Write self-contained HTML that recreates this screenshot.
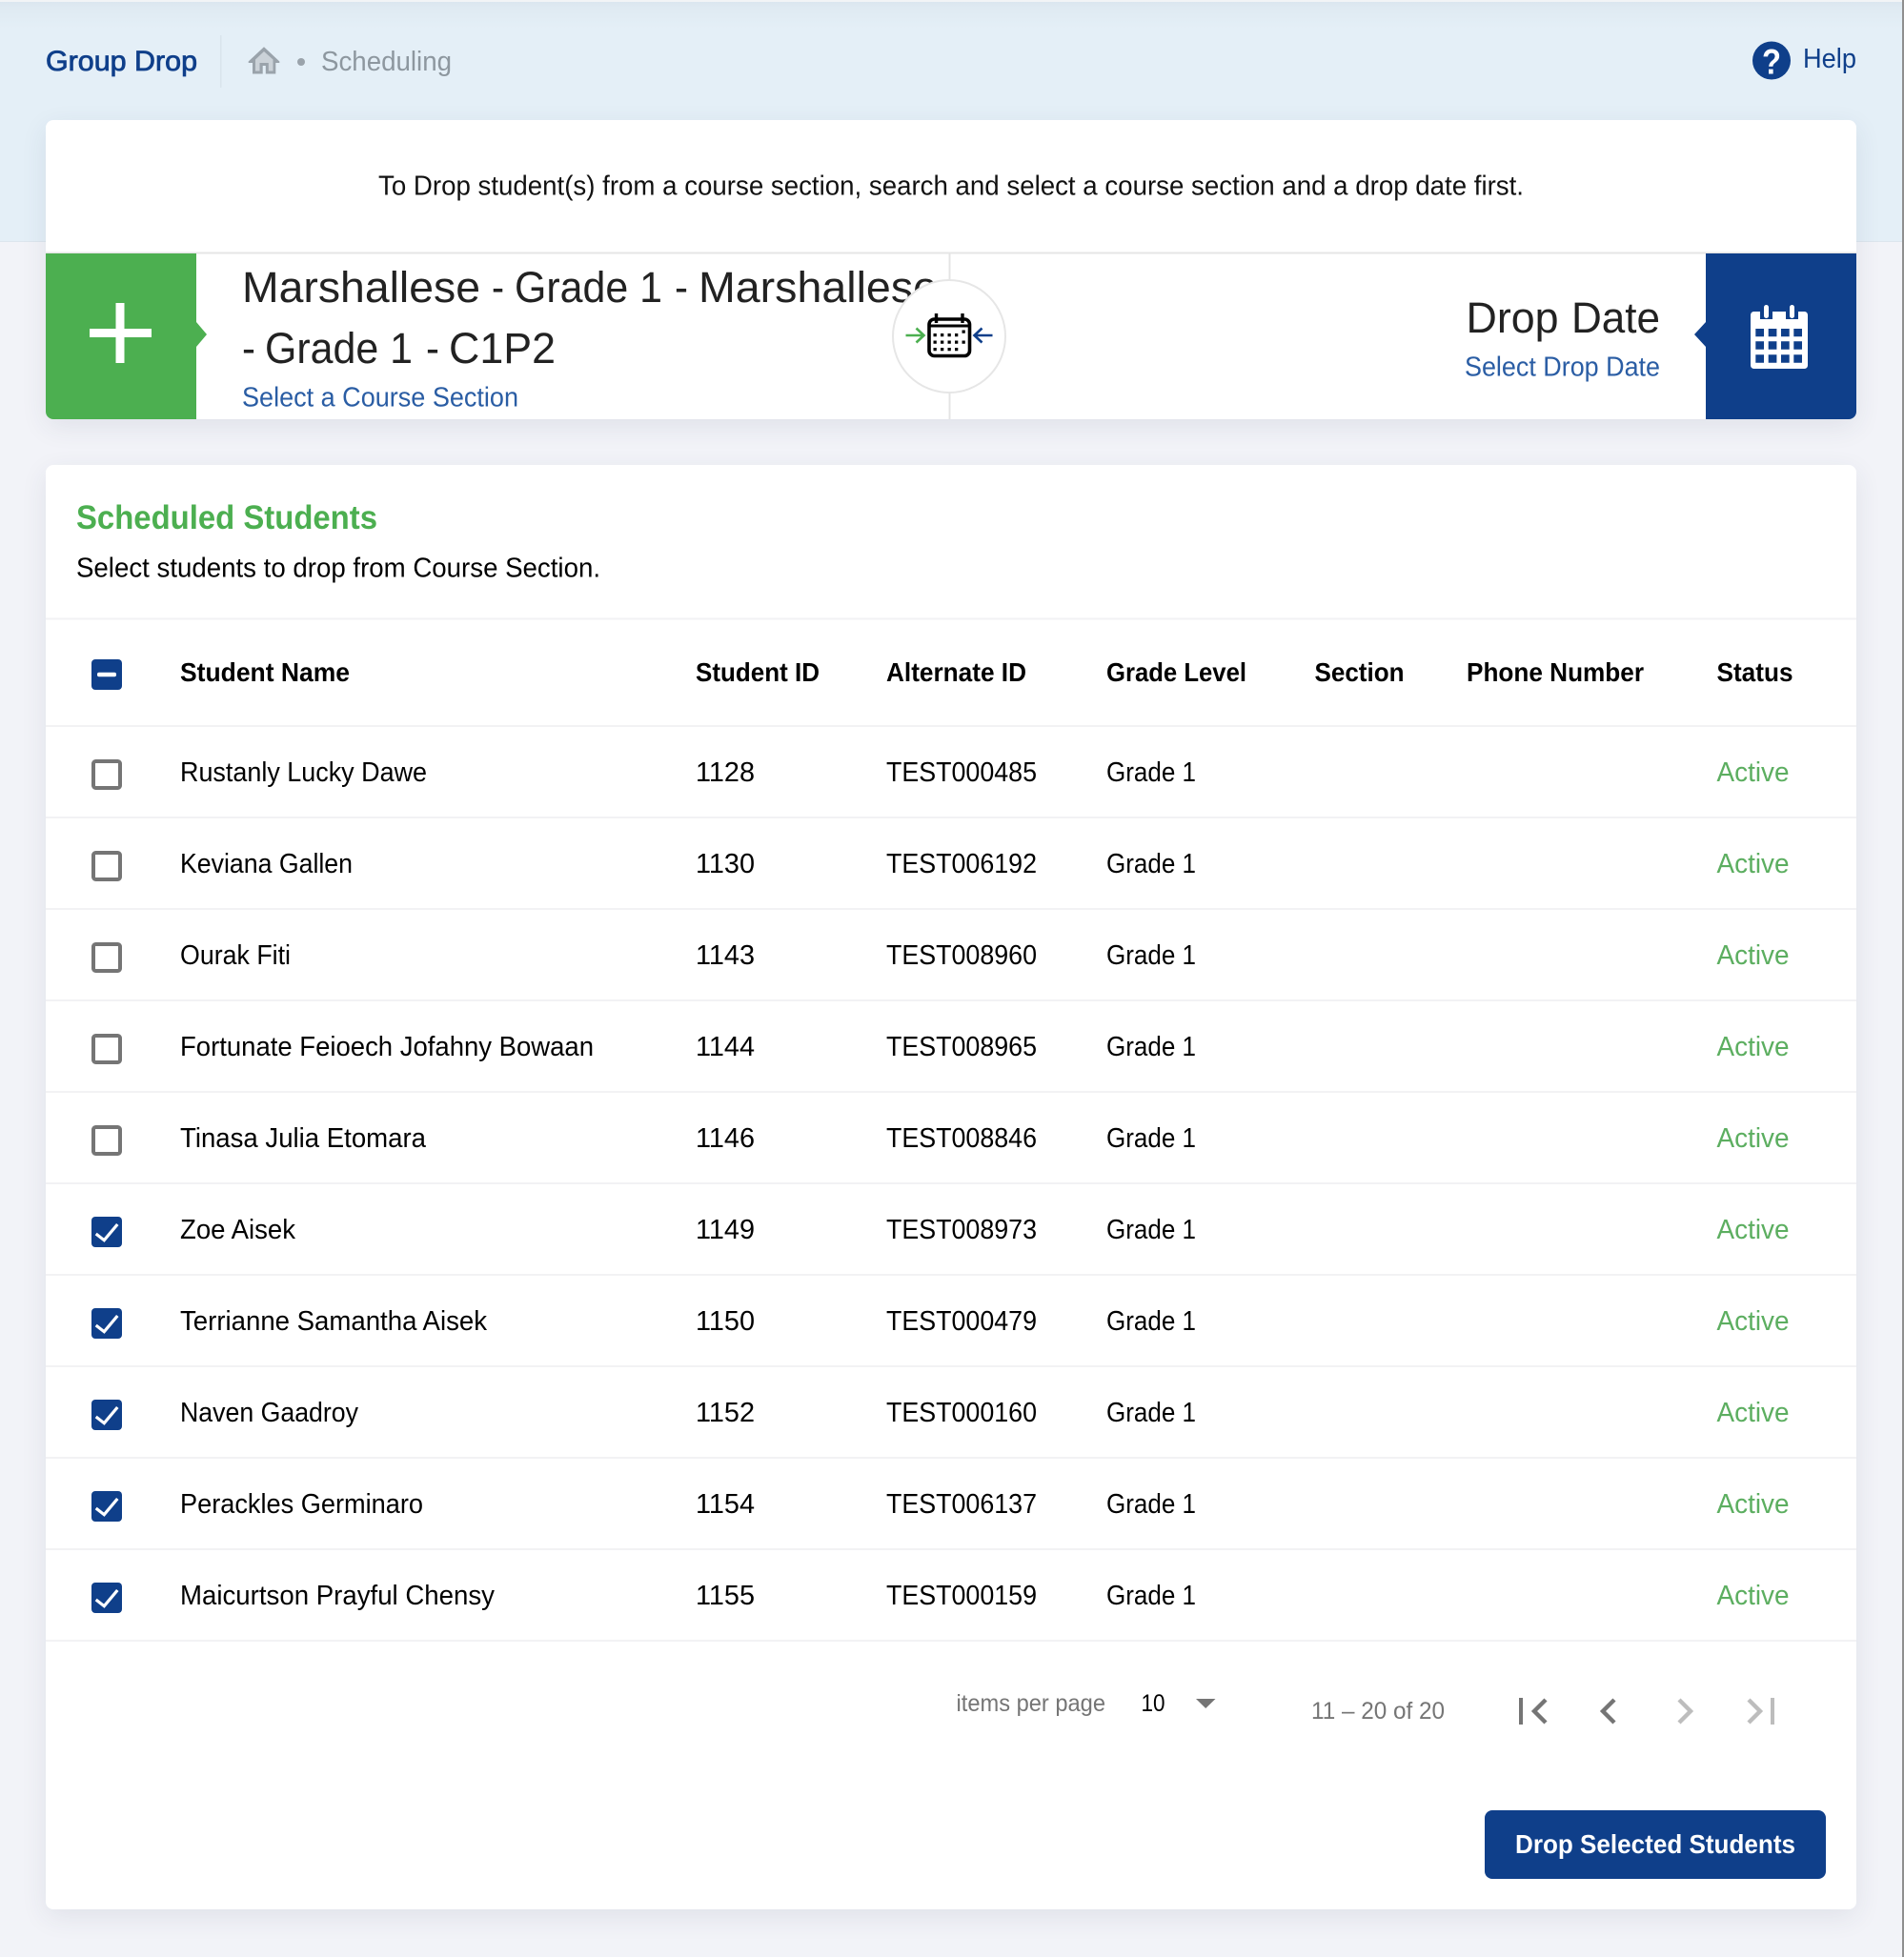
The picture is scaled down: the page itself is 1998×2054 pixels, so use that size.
<!DOCTYPE html>
<html lang="en"><head><meta charset="utf-8"><title>Group Drop</title>
<style>
html,body{margin:0;padding:0;width:1998px;height:2054px;overflow:hidden;background:#f2f3f8}
#band{position:absolute;left:0;top:0;width:1998px;height:253px;background:linear-gradient(#dbe6ef 2px,#dfeaf2 8px,#e4eff7 30px,#e4eff7);border-bottom:1px solid #dde6ee}
#top{position:absolute;left:0;top:0;width:1998px;height:2px;background:#f2f4f6}
.card{position:absolute;left:48px;width:1900px;background:#fff;border-radius:8px;box-shadow:0 8px 28px rgba(40,50,90,.09)}
#c1{top:126px;height:314px}
#c2{top:488px;height:1516px}
#sb{position:absolute;left:1996px;top:0;width:2px;height:2054px;background:#8f8f8f}
svg{position:absolute;left:0;top:0}
text{font-family:"Liberation Sans",sans-serif;font-size:28.8px;fill:#000;white-space:pre}
.b{font-weight:700;font-size:27.5px}
.a{fill:#5cae60}
.t{font-size:45px;fill:#222}
.l{fill:#2a5da4}
.g{fill:#757575;font-size:25px}
</style></head><body>
<div id="band"></div><div id="top"></div>
<div class="card" id="c1"></div><div class="card" id="c2"></div>
<svg width="1998" height="2054" viewBox="0 0 1998 2054">
<!-- header -->
<text x="48" y="74" style="font-size:30px;fill:#0f3f8a;stroke:#0f3f8a;stroke-width:.8px" textLength="159" lengthAdjust="spacingAndGlyphs">Group Drop</text>
<rect x="231" y="37" width="1.5" height="55" fill="#d9e4ec"/>
<path fill="#9aa3ab" d="M277 49.300L260.700 64.500V66H265V77.500H289.300V66H293.300V64.500Z"/>
<path fill="#cbd2d8" d="M277 54L268 62.500V74.500H286.500V62.500Z"/>
<path fill="#9aa3ab" d="M272.500 77.500V66H281.800V77.500Z"/>
<path fill="#e4eff7" d="M275.700 77.500V69H278.800V77.500Z"/>
<circle cx="316" cy="65" r="4" fill="#9aa3ab"/>
<text x="337" y="74" style="fill:#8d979f" textLength="137" lengthAdjust="spacingAndGlyphs">Scheduling</text>
<circle cx="1859" cy="63.500" r="20" fill="#0f3f8a"/>
<text x="1849" y="77.500" style="fill:#fff;font-size:37px;font-weight:700" textLength="20" lengthAdjust="spacingAndGlyphs">?</text>
<text x="1892" y="71" style="fill:#0f3f8a" textLength="56" lengthAdjust="spacingAndGlyphs">Help</text>

<!-- intro -->
<text x="397" y="204.500" style="fill:#111" textLength="1202" lengthAdjust="spacingAndGlyphs">To Drop student(s) from a course section, search and select a course section and a drop date first.</text>
<rect x="48" y="264.500" width="1900" height="2" fill="#e6e6e6"/>

<!-- green panel -->
<path fill="#4caf50" d="M48 266H206V338L217 351L206 364V440H56A8 8 0 0 1 48 432Z"/>
<rect x="94" y="345" width="65" height="9" fill="#fff"/>
<rect x="121.500" y="318" width="9" height="63" fill="#fff"/>
<text x="254" y="317" class="t" textLength="250" lengthAdjust="spacingAndGlyphs">Marshallese</text>
<text x="516" y="317" class="t" textLength="13" lengthAdjust="spacingAndGlyphs">-</text>
<text x="540" y="317" class="t" textLength="155" lengthAdjust="spacingAndGlyphs">Grade 1</text>
<text x="708" y="317" class="t" textLength="14" lengthAdjust="spacingAndGlyphs">-</text>
<text x="733" y="317" class="t" textLength="251" lengthAdjust="spacingAndGlyphs">Marshallese</text>
<text x="254" y="381" class="t" textLength="14" lengthAdjust="spacingAndGlyphs">-</text>
<text x="278" y="381" class="t" textLength="155" lengthAdjust="spacingAndGlyphs">Grade 1</text>
<text x="447" y="381" class="t" textLength="14" lengthAdjust="spacingAndGlyphs">-</text>
<text x="471" y="381" class="t" textLength="112" lengthAdjust="spacingAndGlyphs">C1P2</text>
<text x="254" y="426.500" class="l" textLength="290" lengthAdjust="spacingAndGlyphs">Select a Course Section</text>

<!-- center -->
<rect x="995.500" y="266" width="2" height="174" fill="#e4e4e4"/>
<circle cx="996" cy="353" r="59" fill="#fff" stroke="#e6e6e6" stroke-width="2"/>
<path d="M950.500 352H969M961.500 344.500L969.500 352L961.500 359.500" fill="none" stroke="#4caf50" stroke-width="2.600"/>
<path d="M1041.500 352H1023M1030.500 344.500L1022.500 352L1030.500 359.500" fill="none" stroke="#0f3f8a" stroke-width="2.600"/>
<rect x="975" y="335" width="42.500" height="38.500" rx="5.500" fill="#fff" stroke="#000" stroke-width="3.600"/>
<path d="M975 342H1017" stroke="#000" stroke-width="3"/>
<path d="M982.500 329V339M1010 329V339" stroke="#000" stroke-width="3.400"/>
<path fill="#000" d="M979.500 350h3.300v3.300h-3.300zM987 350h3.300v3.300h-3.300zM994.500 350h3.300v3.300h-3.300zM1002 350h3.300v3.300h-3.300zM1009.500 346.500h3.300v3.300h-3.300zM979.500 357.500h3.300v3.300h-3.300zM987 357.500h3.300v3.300h-3.300zM994.500 357.500h3.300v3.300h-3.300zM1002 357.500h3.300v3.300h-3.300zM1009.500 357.500h3.300v3.300h-3.300zM979.500 365h3.300v3.300h-3.300zM987 365h3.300v3.300h-3.300zM994.500 365h3.300v3.300h-3.300zM1002 365h3.300v3.300h-3.300z"/>

<!-- navy panel -->
<path fill="#0f3f8a" d="M1790 266H1948V432A8 8 0 0 1 1940 440H1790V364L1778 351L1790 338Z"/>
<rect x="1837" y="327" width="60" height="60" rx="3.500" fill="#fff"/>
<path fill="#0f3f8a" d="M1847 326H1860V335H1847ZM1874 326H1887V335H1874ZM1842.300 345h8.700v8.300h-8.700zM1855.700 345h8.700v8.300h-8.700zM1869 345h8.700v8.300h-8.700zM1882.300 345h8.700v8.300h-8.700zM1842.300 358.300h8.700v8.400h-8.700zM1855.700 358.300h8.700v8.400h-8.700zM1869 358.300h8.700v8.400h-8.700zM1882.300 358.300h8.700v8.400h-8.700zM1842.300 372.300h8.700v8.400h-8.700zM1855.700 372.300h8.700v8.400h-8.700zM1869 372.300h8.700v8.400h-8.700zM1882.300 372.300h8.700v8.400h-8.700z"/>
<rect x="1851" y="320" width="5" height="14" rx="2.500" fill="#fff"/>
<rect x="1878" y="320" width="5" height="14" rx="2.500" fill="#fff"/>
<text x="1538.500" y="349" class="t" textLength="97" lengthAdjust="spacingAndGlyphs">Drop</text>
<text x="1649" y="349" class="t" textLength="93" lengthAdjust="spacingAndGlyphs">Date</text>
<text x="1537" y="394.500" class="l" textLength="205" lengthAdjust="spacingAndGlyphs">Select Drop Date</text>

<!-- card heading -->
<text x="80" y="555" style="font-size:35px;font-weight:700;fill:#4caf50" textLength="316" lengthAdjust="spacingAndGlyphs">Scheduled Students</text>
<text x="80" y="605.500" textLength="550" lengthAdjust="spacingAndGlyphs">Select students to drop from Course Section.</text>

<!-- lines -->
<g fill="#f2f2f4">
<rect x="48" y="648.500" width="1900" height="2"/><rect x="48" y="761" width="1900" height="2"/><rect x="48" y="857" width="1900" height="2"/><rect x="48" y="953" width="1900" height="2"/><rect x="48" y="1049" width="1900" height="2"/><rect x="48" y="1145" width="1900" height="2"/><rect x="48" y="1241" width="1900" height="2"/><rect x="48" y="1337" width="1900" height="2"/><rect x="48" y="1433" width="1900" height="2"/><rect x="48" y="1529" width="1900" height="2"/><rect x="48" y="1625" width="1900" height="2"/><rect x="48" y="1721" width="1900" height="2"/>
</g>

<!-- table head -->
<rect x="96" y="692" width="32" height="32" rx="4" fill="#0f3f8a"/>
<rect x="102" y="705.700" width="20" height="4.500" rx="2" fill="#fff"/>
<text class="b" x="189" y="715" textLength="178" lengthAdjust="spacingAndGlyphs">Student Name</text>
<text class="b" x="730" y="715" textLength="130" lengthAdjust="spacingAndGlyphs">Student ID</text>
<text class="b" x="930" y="715" textLength="147" lengthAdjust="spacingAndGlyphs">Alternate ID</text>
<text class="b" x="1161" y="715" textLength="147" lengthAdjust="spacingAndGlyphs">Grade Level</text>
<text class="b" x="1379.500" y="715" textLength="94" lengthAdjust="spacingAndGlyphs">Section</text>
<text class="b" x="1539" y="715" textLength="186" lengthAdjust="spacingAndGlyphs">Phone Number</text>
<text class="b" x="1801.500" y="715" textLength="80" lengthAdjust="spacingAndGlyphs">Status</text>

<!-- checkboxes -->
<g fill="#fff" stroke="#757575" stroke-width="4">
<rect x="98" y="799" width="28" height="28" rx="2.500"/><rect x="98" y="895" width="28" height="28" rx="2.500"/><rect x="98" y="991" width="28" height="28" rx="2.500"/><rect x="98" y="1087" width="28" height="28" rx="2.500"/><rect x="98" y="1183" width="28" height="28" rx="2.500"/>
</g>
<g fill="#0f3f8a">
<rect x="96" y="1277" width="32" height="32" rx="4"/><rect x="96" y="1373" width="32" height="32" rx="4"/><rect x="96" y="1469" width="32" height="32" rx="4"/><rect x="96" y="1565" width="32" height="32" rx="4"/><rect x="96" y="1661" width="32" height="32" rx="4"/>
</g>
<g fill="none" stroke="#fff" stroke-width="3.200">
<path d="M100.700 1295L109.300 1301.700L123.300 1285"/><path d="M100.700 1391L109.300 1397.700L123.300 1381"/><path d="M100.700 1487L109.300 1493.700L123.300 1477"/><path d="M100.700 1583L109.300 1589.700L123.300 1573"/><path d="M100.700 1679L109.300 1685.700L123.300 1669"/>
</g>

<!-- rows -->
<text x="189" y="820" textLength="259" lengthAdjust="spacingAndGlyphs">Rustanly Lucky Dawe</text><text x="730" y="820" textLength="62" lengthAdjust="spacingAndGlyphs">1128</text><text x="930" y="820" textLength="158" lengthAdjust="spacingAndGlyphs">TEST000485</text><text x="1161" y="820" textLength="94" lengthAdjust="spacingAndGlyphs">Grade 1</text><text class="a" x="1801.500" y="820" textLength="76" lengthAdjust="spacingAndGlyphs">Active</text>
<text x="189" y="916" textLength="181" lengthAdjust="spacingAndGlyphs">Keviana Gallen</text><text x="730" y="916" textLength="62" lengthAdjust="spacingAndGlyphs">1130</text><text x="930" y="916" textLength="158" lengthAdjust="spacingAndGlyphs">TEST006192</text><text x="1161" y="916" textLength="94" lengthAdjust="spacingAndGlyphs">Grade 1</text><text class="a" x="1801.500" y="916" textLength="76" lengthAdjust="spacingAndGlyphs">Active</text>
<text x="189" y="1012" textLength="116" lengthAdjust="spacingAndGlyphs">Ourak Fiti</text><text x="730" y="1012" textLength="62" lengthAdjust="spacingAndGlyphs">1143</text><text x="930" y="1012" textLength="158" lengthAdjust="spacingAndGlyphs">TEST008960</text><text x="1161" y="1012" textLength="94" lengthAdjust="spacingAndGlyphs">Grade 1</text><text class="a" x="1801.500" y="1012" textLength="76" lengthAdjust="spacingAndGlyphs">Active</text>
<text x="189" y="1108" textLength="434" lengthAdjust="spacingAndGlyphs">Fortunate Feioech Jofahny Bowaan</text><text x="730" y="1108" textLength="62" lengthAdjust="spacingAndGlyphs">1144</text><text x="930" y="1108" textLength="158" lengthAdjust="spacingAndGlyphs">TEST008965</text><text x="1161" y="1108" textLength="94" lengthAdjust="spacingAndGlyphs">Grade 1</text><text class="a" x="1801.500" y="1108" textLength="76" lengthAdjust="spacingAndGlyphs">Active</text>
<text x="189" y="1204" textLength="258" lengthAdjust="spacingAndGlyphs">Tinasa Julia Etomara</text><text x="730" y="1204" textLength="62" lengthAdjust="spacingAndGlyphs">1146</text><text x="930" y="1204" textLength="158" lengthAdjust="spacingAndGlyphs">TEST008846</text><text x="1161" y="1204" textLength="94" lengthAdjust="spacingAndGlyphs">Grade 1</text><text class="a" x="1801.500" y="1204" textLength="76" lengthAdjust="spacingAndGlyphs">Active</text>
<text x="189" y="1300" textLength="121" lengthAdjust="spacingAndGlyphs">Zoe Aisek</text><text x="730" y="1300" textLength="62" lengthAdjust="spacingAndGlyphs">1149</text><text x="930" y="1300" textLength="158" lengthAdjust="spacingAndGlyphs">TEST008973</text><text x="1161" y="1300" textLength="94" lengthAdjust="spacingAndGlyphs">Grade 1</text><text class="a" x="1801.500" y="1300" textLength="76" lengthAdjust="spacingAndGlyphs">Active</text>
<text x="189" y="1396" textLength="322" lengthAdjust="spacingAndGlyphs">Terrianne Samantha Aisek</text><text x="730" y="1396" textLength="62" lengthAdjust="spacingAndGlyphs">1150</text><text x="930" y="1396" textLength="158" lengthAdjust="spacingAndGlyphs">TEST000479</text><text x="1161" y="1396" textLength="94" lengthAdjust="spacingAndGlyphs">Grade 1</text><text class="a" x="1801.500" y="1396" textLength="76" lengthAdjust="spacingAndGlyphs">Active</text>
<text x="189" y="1492" textLength="187" lengthAdjust="spacingAndGlyphs">Naven Gaadroy</text><text x="730" y="1492" textLength="62" lengthAdjust="spacingAndGlyphs">1152</text><text x="930" y="1492" textLength="158" lengthAdjust="spacingAndGlyphs">TEST000160</text><text x="1161" y="1492" textLength="94" lengthAdjust="spacingAndGlyphs">Grade 1</text><text class="a" x="1801.500" y="1492" textLength="76" lengthAdjust="spacingAndGlyphs">Active</text>
<text x="189" y="1588" textLength="255" lengthAdjust="spacingAndGlyphs">Perackles Germinaro</text><text x="730" y="1588" textLength="62" lengthAdjust="spacingAndGlyphs">1154</text><text x="930" y="1588" textLength="158" lengthAdjust="spacingAndGlyphs">TEST006137</text><text x="1161" y="1588" textLength="94" lengthAdjust="spacingAndGlyphs">Grade 1</text><text class="a" x="1801.500" y="1588" textLength="76" lengthAdjust="spacingAndGlyphs">Active</text>
<text x="189" y="1684" textLength="330" lengthAdjust="spacingAndGlyphs">Maicurtson Prayful Chensy</text><text x="730" y="1684" textLength="62" lengthAdjust="spacingAndGlyphs">1155</text><text x="930" y="1684" textLength="158" lengthAdjust="spacingAndGlyphs">TEST000159</text><text x="1161" y="1684" textLength="94" lengthAdjust="spacingAndGlyphs">Grade 1</text><text class="a" x="1801.500" y="1684" textLength="76" lengthAdjust="spacingAndGlyphs">Active</text>

<!-- pagination -->
<text class="g" x="1003.500" y="1796" textLength="156.500" lengthAdjust="spacingAndGlyphs">items per page</text>
<text x="1197.500" y="1796" style="font-size:25px" textLength="25" lengthAdjust="spacingAndGlyphs">10</text>
<path d="M1255 1783H1275.500L1265.200 1793Z" fill="#757575"/>
<text class="g" x="1376" y="1804" textLength="140" lengthAdjust="spacingAndGlyphs">11 – 20 of 20</text>
<rect x="1594" y="1782" width="4" height="28" fill="#757575"/>
<path d="M1622 1784L1610 1796L1622 1808" fill="none" stroke="#757575" stroke-width="4.400"/>
<path d="M1694 1784L1682 1796L1694 1808" fill="none" stroke="#757575" stroke-width="4.400"/>
<path d="M1762 1784L1774 1796L1762 1808" fill="none" stroke="#bdbdbd" stroke-width="4.400"/>
<path d="M1835 1784L1847 1796L1835 1808" fill="none" stroke="#bdbdbd" stroke-width="4.400"/>
<rect x="1858" y="1782" width="4" height="28" fill="#bdbdbd"/>

<!-- button -->
<rect x="1558" y="1900" width="358" height="72" rx="8" fill="#0f3f8a"/>
<text x="1590" y="1945" style="font-weight:700;font-size:28px;fill:#fff" textLength="294" lengthAdjust="spacingAndGlyphs">Drop Selected Students</text>
</svg>
<div id="sb"></div>
</body></html>
